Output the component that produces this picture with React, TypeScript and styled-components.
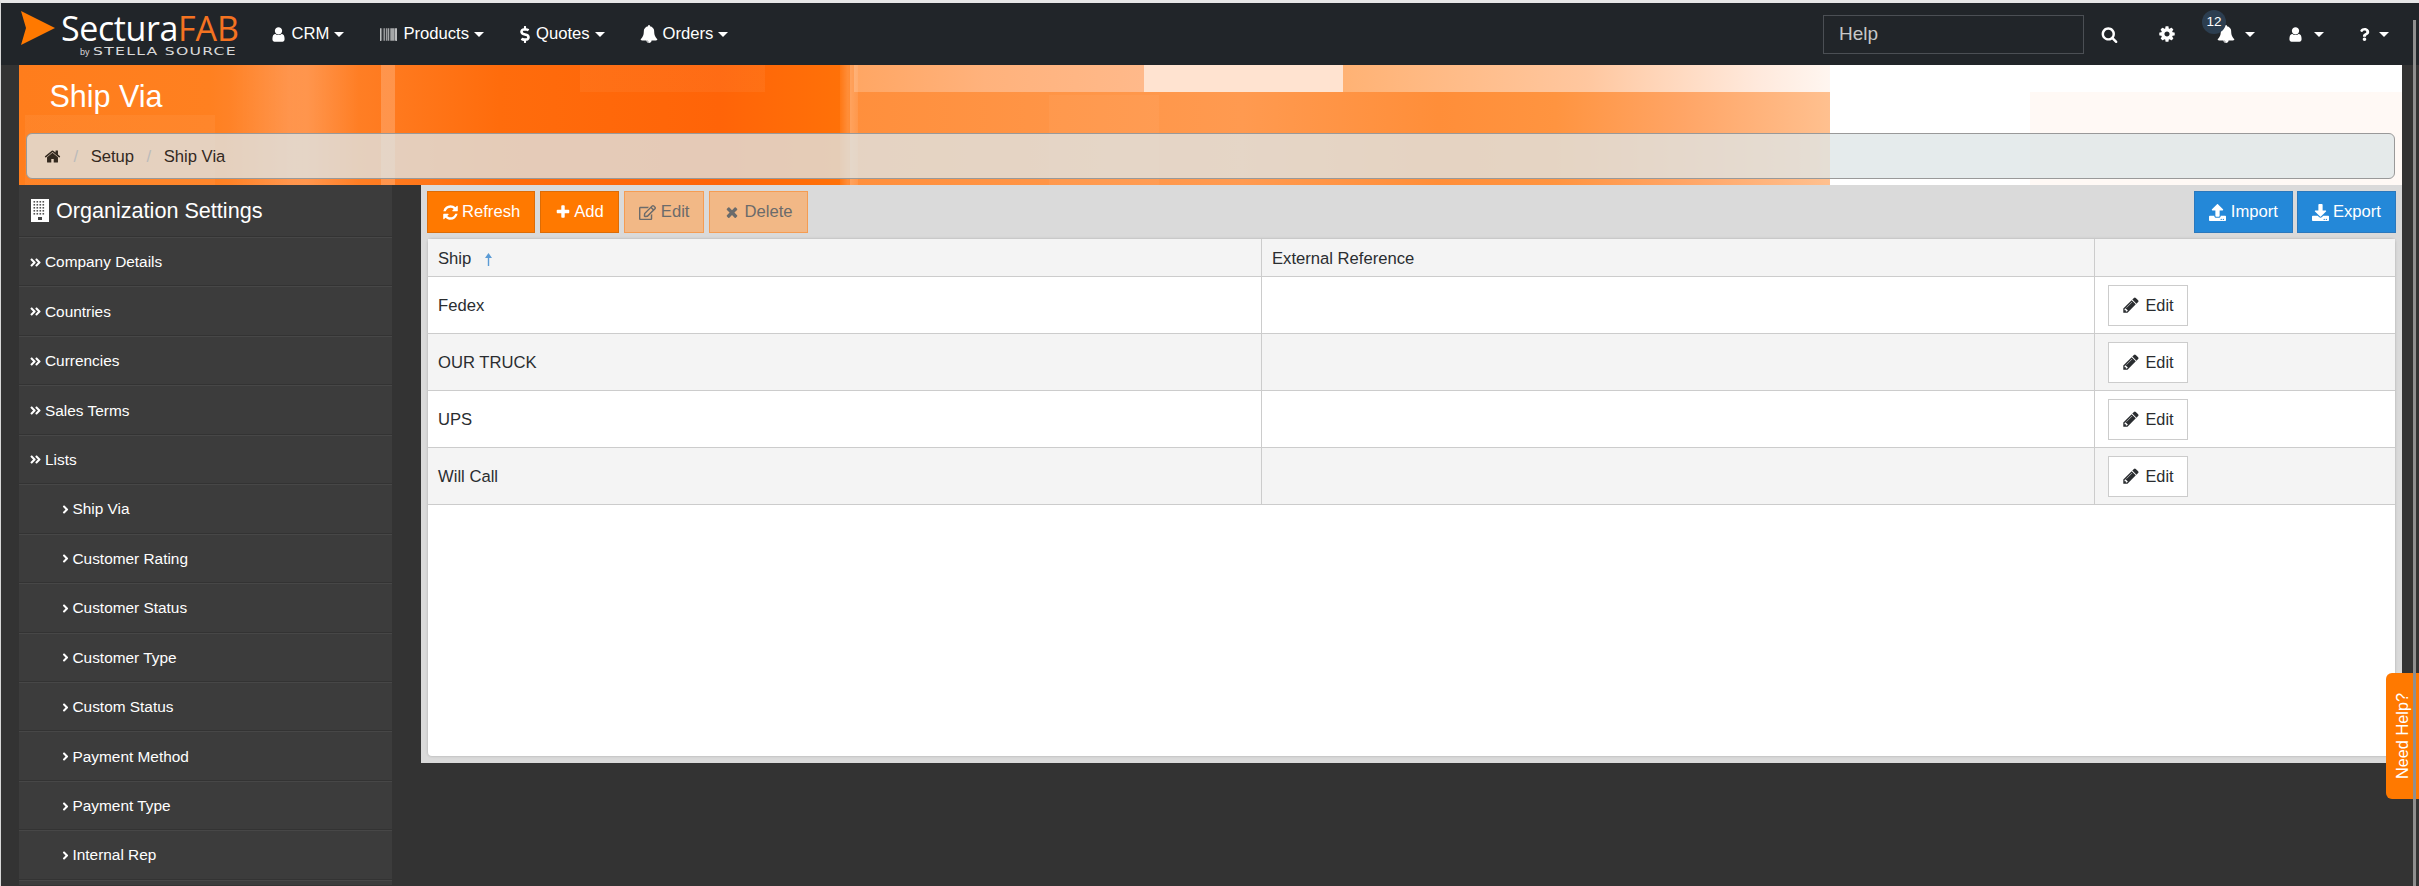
import React from "react";
import styled, { createGlobalStyle } from "styled-components";
import {
  FaAngleDoubleRight,
  FaAngleRight,
  FaBarcode,
  FaDollarSign,
  FaDownload,
  FaQuestion,
  FaRegEdit,
  FaUpload,
} from "react-icons/fa";

const GlobalStyle = createGlobalStyle`
  html, body {
    margin: 0;
    height: 100%;
    overflow: hidden;
    background: #333;
  }
  body, button, input, table {
    font-family: "Liberation Sans", Arial, sans-serif;
    font-size: 16.64px;
  }
  * {
    box-sizing: border-box;
  }
`;

// font awesome 4 shapes, react-icons only carries v5
const glyphs = {
  user: "M1536 1399q0 109-62.5 187t-150.5 78h-854q-88 0-150.5-78t-62.5-187q0-85 8.5-160.5t31.5-152 58.5-131 94-89 134.5-34.5q131 128 313 128t313-128q76 0 134.5 34.5t94 89 58.5 131 31.5 152 8.5 160.5zm-256-887q0 159-112.5 271.5t-271.5 112.5-271.5-112.5-112.5-271.5 112.5-271.5 271.5-112.5 271.5 112.5 112.5 271.5z",
  bell: "M912 1696q0-16-16-16-59 0-101.5-42.5t-42.5-101.5q0-16-16-16t-16 16q0 73 51.5 124.5t124.5 51.5q16 0 16-16zm816-288q0 52-38 90t-90 38h-448q0 106-75 181t-181 75-181-75-75-181h-448q-52 0-90-38t-38-90q50-42 91-88t85-119.5 74.5-158.5 50-206 19.5-260q0-152 117-282.5t307-158.5q-8-19-8-39 0-40 28-68t68-28 68 28 28 68q0 20-8 39 190 28 307 158.5t117 282.5q0 139 19.5 260t50 206 74.5 158.5 85 119.5 91 88z",
  search: "M1216 832q0-185-131.5-316.5t-316.5-131.5-316.5 131.5-131.5 316.5 131.5 316.5 316.5 131.5 316.5-131.5 131.5-316.5zm512 832q0 52-38 90t-90 38q-54 0-90-38l-343-342q-179 124-399 124-143 0-273.5-55.5t-225-150-150-225-55.5-273.5 55.5-273.5 150-225 225-150 273.5-55.5 273.5 55.5 225 150 150 225 55.5 273.5q0 220-124 399l343 343q37 37 37 90z",
  cog: "M1152 896q0-106-75-181t-181-75-181 75-75 181 75 181 181 75 181-75 75-181zm512-109v222q0 12-8 23t-20 13l-185 28q-19 54-39 91 35 50 107 138 10 12 10 25t-9 23q-27 37-99 108t-94 71q-12 0-26-9l-138-108q-44 23-91 38-16 136-29 186-7 28-36 28h-222q-14 0-24.5-8.5t-11.5-21.5l-28-184q-49-16-90-37l-141 107q-10 9-25 9-14 0-25-11-126-114-165-168-7-10-7-23 0-12 8-23 15-21 51-66.5t54-70.5q-27-50-41-99l-183-27q-13-2-21-12.5t-8-23.5v-222q0-12 8-23t19-13l186-28q14-46 39-92-40-57-107-138-10-12-10-24 0-10 9-23 26-36 98.5-107.5t94.5-71.5q13 0 26 10l138 107q44-23 91-38 16-136 29-186 7-28 36-28h222q14 0 24.5 8.5t11.5 21.5l28 184q49 16 90 37l142-107q9-9 24-9 13 0 25 10 129 119 165 170 7 8 7 22 0 12-8 23-15 21-51 66.5t-54 70.5q26 50 41 98l183 28q13 2 21 12.5t8 23.5z",
  home: "M1472 992v480q0 26-19 45t-45 19h-384v-384h-256v384h-384q-26 0-45-19t-19-45v-480q0-1 .5-3t.5-3l575-474 575 474q1 2 1 6zm223-69l-62 74q-8 9-21 11h-3q-13 0-21-7l-692-577-692 577q-12 8-24 7-13-2-21-11l-62-74q-8-10-7-23.5t11-21.5l719-599q32-26 76-26t76 26l244 204v-195q0-14 9-23t23-9h192q14 0 23 9t9 23v408l219 182q10 8 11 21.5t-7 23.5z",
  refresh: "M1639 1056q0 5-1 7-64 268-268 434.5t-478 166.5q-146 0-282.5-55t-243.5-157l-129 129q-19 19-45 19t-45-19-19-45v-448q0-26 19-45t45-19h448q26 0 45 19t19 45-19 45l-137 137q71 66 161 102t187 36q134 0 250-65t186-179q11-17 53-117 8-23 30-23h192q13 0 22.5 9.5t9.5 22.5zm25-800v448q0 26-19 45t-45 19h-448q-26 0-45-19t-19-45 19-45l138-138q-148-137-349-137-134 0-250 65t-186 179q-11 17-53 117-8 23-30 23h-199q-13 0-22.5-9.5t-9.5-22.5v-7q65-268 270-434.5t480-166.5q146 0 284 55.5t245 156.5l130-129q19-19 45-19t45 19 19 45z",
  plus: "M1600 736v192q0 40-28 68t-68 28h-416v416q0 40-28 68t-68 28h-192q-40 0-68-28t-28-68v-416h-416q-40 0-68-28t-28-68v-192q0-40 28-68t68-28h416v-416q0-40 28-68t68-28h192q40 0 68 28t28 68v416h416q40 0 68 28t28 68z",
  times: "M1490 1322q0 40-28 68l-136 136q-28 28-68 28t-68-28l-294-294-294 294q-28 28-68 28t-68-28l-136-136q-28-28-28-68t28-68l294-294-294-294q-28-28-28-68t28-68l136-136q28-28 68-28t68 28l294 294 294-294q28-28 68-28t68 28l136 136q28 28 28 68t-28 68l-294 294 294 294q28 28 28 68z",
  pencil: "M491 1536l91-91-235-235-91 91v107h128v128h107zm523-928q0-22-22-22-10 0-17 7l-542 542q-7 7-7 17 0 22 22 22 10 0 17-7l542-542q7-7 7-17zm-54-192l416 416-832 832h-416v-416zm683 96q0 53-37 90l-166 166-416-416 166-165q36-38 90-38 53 0 91 38l235 234q37 39 37 91z",
};

const Glyph: React.FC<{ name: keyof typeof glyphs; size: number }> = ({ name, size }) => (
  <svg width={size} height={size} viewBox="0 0 1792 1792" fill="currentColor" style={{ flex: "none" }}>
    <path d={glyphs[name]} />
  </svg>
);

const Page = styled.div`
  position: relative;
  height: 886px;
  overflow: hidden;
  background: #333;
  border-top: 3px solid #e6e6e6;
  border-left: 1px solid #d8d8d8;
`;

const Navbar = styled.nav`
  display: flex;
  align-items: center;
  gap: 36px;
  height: 62px;
  padding: 0 30px 0 20px;
  background: #212529;
  color: #fff;
`;

const Logo = styled.div`
  display: flex;
  width: 214.5px;
  height: 50px;
`;

const LogoWords = styled.div`
  margin-left: 5px;
  margin-top: 1px;
`;

const LogoName = styled.div`
  font-family: "Open Sans", sans-serif;
  font-size: 34px;
  line-height: 36px;
  letter-spacing: -0.4px;
  color: #fff;
  white-space: nowrap;
`;

const LogoAccent = styled.span`
  color: #f47321;
  letter-spacing: 0;
`;

const LogoByline = styled.div`
  display: flex;
  align-items: baseline;
  margin: 0 0 0 19px;
  color: #d9d9d9;
  white-space: nowrap;
`;

const LogoBy = styled.span`
  font-size: 9px;
  margin-right: 3px;
`;

const LogoSource = styled.span`
  font-family: "DejaVu Sans", sans-serif;
  font-size: 11px;
  letter-spacing: 0.9px;
  line-height: 12px;
  transform: scaleX(1.42);
  transform-origin: left;
`;

const NavLink = styled.a`
  display: flex;
  align-items: center;
  gap: 5px;
  color: #fff;
`;

const NavIcon = styled.span`
  display: flex;
  align-items: center;
  justify-content: center;
  width: ${(p: { $w: number }) => p.$w}px;
  margin-right: 1px;
`;

const Caret = styled.i`
  display: block;
  width: 0;
  height: 0;
  border-top: 5px solid #fff;
  border-left: 5px solid transparent;
  border-right: 5px solid transparent;
`;

const NavRight = styled.div`
  display: flex;
  align-items: center;
  margin-left: auto;
`;

const HelpSearch = styled.input`
  width: 261px;
  height: 39px;
  padding: 0 15px;
  border: 1px solid #4b4f54;
  background: transparent;
  font-size: 19px;
  outline: none;
  &::placeholder {
    color: #c6c7c8;
    opacity: 1;
  }
`;

const ToolIcon = styled.span<{ $ml: number; $gap?: number }>`
  position: relative;
  display: flex;
  align-items: center;
  gap: ${(p) => p.$gap ?? 10}px;
  margin-left: ${(p) => p.$ml}px;
  color: #fff;
`;

const Badge = styled.span`
  position: absolute;
  left: -15px;
  top: -15px;
  width: 24px;
  height: 24px;
  border-radius: 50%;
  background: #2c3e50;
  font-size: 13.5px;
  line-height: 24px;
  text-align: center;
  color: #fff;
`;

const Main = styled.div`
  padding: 0 17px 0 18px;
`;

const Banner = styled.header`
  height: 120px;
  padding: 0 7px 6px 6.5px;
  background-color: #fff;
  background-repeat: no-repeat;
  background-image:
    linear-gradient(rgba(255, 255, 255, 0.2), rgba(255, 255, 255, 0.2)),
    linear-gradient(90deg, rgba(255, 255, 255, 0.05), rgba(255, 255, 255, 0.2) 45%, rgba(255, 255, 255, 0.08)),
    linear-gradient(rgba(255, 255, 255, 0.05), rgba(255, 255, 255, 0.05)),
    linear-gradient(rgba(255, 255, 255, 0.05), rgba(255, 255, 255, 0.05)),
    linear-gradient(rgba(255, 255, 255, 0.04), rgba(255, 255, 255, 0.04)),
    linear-gradient(90deg, rgba(255, 255, 255, 0), rgba(255, 255, 255, 0.12) 60%, rgba(255, 255, 255, 0)),
    linear-gradient(90deg, #ffa663 0, #ffb27c 45%, #ffb98a 100%),
    linear-gradient(#ffe3d0, #ffe3d0),
    linear-gradient(90deg, #ffb274 0, #ffc79f 50%, #ffe9dc 85%, #fff6f0 100%),
    linear-gradient(90deg, #ff8f3c 0, #ff9a50 40%, #ff8e39 60%, #ff9440 72%, #ffa566 85%, #ffc08f 100%),
    linear-gradient(90deg, #ff7d1c 0, #ff8020 190px, #ff8a3a 270px, #ff7e24 340px, #ff6c0c 480px, #ff6408 700px, #ff7208 832px),
    linear-gradient(#fff9f5, #fff9f5);
  background-size:
    14px 100%,
    18px 100%,
    185px 27px,
    190px 70px,
    110px 90px,
    130px 100%,
    290px 27px,
    199px 27px,
    487px 27px,
    980px 100%,
    832px 100%,
    372px 100%;
  background-position:
    362px 0,
    821px 0,
    561px 0,
    6px 50px,
    1030px 30px,
    210px 0,
    835px 0,
    1125px 0,
    1324px 0,
    831px 0,
    0 0,
    2011px 27px;
`;

const PageTitle = styled.h1`
  margin: 0;
  height: 68px;
  padding-left: 24px;
  color: #fff;
  font-size: 30.5px;
  font-weight: 400;
  line-height: 62px;
`;

const Breadcrumb = styled.ol`
  display: flex;
  align-items: center;
  height: 46px;
  margin: 0;
  padding: 1px 17.5px 0;
  list-style: none;
  border: 1px solid #999;
  border-radius: 6px;
  background: rgba(222, 229, 231, 0.79);
  color: #33291f;
`;

const Crumb = styled.li`
  display: flex;
  align-items: center;
`;

const CrumbSlash = styled.span`
  margin: 0 12.5px;
  color: #bbb;
`;

const Body = styled.div`
  display: flex;
  align-items: flex-start;
  gap: 29px;
`;

const Sidebar = styled.aside`
  flex: none;
  width: 373px;
  height: 700px;
  background: #3c3c3c;
  color: #fff;
`;

const SideTitle = styled.h2`
  display: flex;
  align-items: center;
  gap: 7px;
  height: 52px;
  margin: 0;
  padding-left: 12px;
  font-size: 21.6px;
  font-weight: 400;
  border-bottom: 1px solid #333;
  box-shadow: 0 1px 0 #474747;
`;

const SideItem = styled.div<{ $sub?: boolean }>`
  display: flex;
  align-items: center;
  gap: ${(p) => (p.$sub ? "1px" : "3px")};
  height: 49.45px;
  padding: 2px 0 0 ${(p) => (p.$sub ? "39.5px" : "10px")};
  font-size: 15.4px;
  border-bottom: 1px solid #333;
  box-shadow: 0 1px 0 #474747;
`;

const Panel = styled.section`
  flex: 1;
  height: 578px;
  padding: 6px 7px 7px 6px;
  background: #dadada;
`;

const Toolbar = styled.div`
  display: flex;
  justify-content: space-between;
  height: 42px;
  margin: 0 -1px 6px 0;
`;

const ToolGroup = styled.div<{ $gap: number }>`
  display: flex;
  gap: ${(p) => p.$gap}px;
`;

const ToolButton = styled.button<{ $kind: "primary" | "muted" | "blue"; $gap: number }>`
  display: flex;
  align-items: center;
  gap: ${(p) => p.$gap}px;
  height: 42px;
  padding: 0 14px;
  border: 1px solid
    ${(p) => (p.$kind === "primary" ? "#dd6c05" : p.$kind === "muted" ? "#f59c52" : "#2a78bd")};
  background: ${(p) => (p.$kind === "primary" ? "#ff7900" : p.$kind === "muted" ? "#f2b886" : "#2488d8")};
  color: ${(p) => (p.$kind === "muted" ? "#6b6b6b" : "#fff")};
  font-size: 16.64px;
`;

const TableCard = styled.div`
  height: 517px;
  margin-left: 1px;
  background: #fff;
  border-radius: 4px;
  box-shadow: 0 0 3px rgba(0, 0, 0, 0.22);
`;

const Grid = styled.table`
  width: 100%;
  table-layout: fixed;
  border-collapse: separate;
  border-spacing: 0;
  color: #2a2d30;
`;

const HeadCell = styled.th`
  height: 38px;
  padding: 3px 0 0 10px;
  background: #f4f4f4;
  font-weight: 400;
  text-align: left;
  border-right: 1px solid #ccc;
  border-bottom: 1px solid #ccc;
  &:last-child {
    border-right: 0;
  }
`;

const SortArrow = styled.svg`
  margin-left: 14px;
  vertical-align: -2px;
`;

const BodyRow = styled.tr`
  &:nth-child(even) td {
    background: #f4f4f4;
  }
`;

const BodyCell = styled.td`
  height: 57px;
  padding: 1px 0 0 10px;
  border-right: 1px solid #ccc;
  border-bottom: 1px solid #ccc;
  &:last-child {
    border-right: 0;
    padding: 0 0 0 13px;
  }
`;

const EditButton = styled.button`
  display: flex;
  align-items: center;
  justify-content: center;
  gap: 5px;
  width: 80px;
  height: 41px;
  padding: 0;
  border: 1px solid #ccc;
  background: #fff;
  color: #2a2d30;
  font-size: 16.3px;
`;

const HelpTab = styled.div`
  position: absolute;
  right: 0;
  top: 670px;
  width: 33px;
  height: 126px;
  display: flex;
  align-items: center;
  justify-content: center;
  background: #ff7900;
  border-radius: 0 6px 6px 0;
  color: #fff;
  font-size: 16.3px;
  writing-mode: vertical-rl;
  transform: rotate(180deg);
`;

const ScrollThumb = styled.div`
  position: absolute;
  top: 17px;
  bottom: 0;
  right: 3px;
  width: 3px;
  background: #8f8f8f;
`;

const topItems = ["Company Details", "Countries", "Currencies", "Sales Terms", "Lists"];
const subItems = [
  "Ship Via",
  "Customer Rating",
  "Customer Status",
  "Customer Type",
  "Custom Status",
  "Payment Method",
  "Payment Type",
  "Internal Rep",
];
const ships = ["Fedex", "OUR TRUCK", "UPS", "Will Call"];
const buildingCols = [2.5, 5.5, 8.5, 11.5];
const buildingRows = [2, 5, 8, 11, 14];

const App: React.FC = () => (
  <Page>
    <GlobalStyle />
    <Navbar>
      <Logo>
        <svg width="35" height="35" viewBox="0 0 35 35" style={{ flex: "none", marginTop: 2 }}>
          <path d="M0 0 L34 17 L0 34 L5 17 Z" fill="#ff7900" />
        </svg>
        <LogoWords>
          <LogoName>
            Sectura<LogoAccent>FAB</LogoAccent>
          </LogoName>
          <LogoByline>
            <LogoBy>by</LogoBy>
            <LogoSource>STELLA SOURCE</LogoSource>
          </LogoByline>
        </LogoWords>
      </Logo>
      <NavLink>
        <NavIcon $w={14}>
          <Glyph name="user" size={17} />
        </NavIcon>
        CRM
        <Caret />
      </NavLink>
      <NavLink>
        <NavIcon $w={17}>
          <FaBarcode size={17} />
        </NavIcon>
        Products
        <Caret />
      </NavLink>
      <NavLink>
        <NavIcon $w={10}>
          <FaDollarSign size={17} />
        </NavIcon>
        Quotes
        <Caret />
      </NavLink>
      <NavLink>
        <NavIcon $w={16}>
          <Glyph name="bell" size={18} />
        </NavIcon>
        Orders
        <Caret />
      </NavLink>
      <NavRight>
        <HelpSearch placeholder="Help" />
        <ToolIcon $ml={17}>
          <Glyph name="search" size={17} />
        </ToolIcon>
        <ToolIcon $ml={40}>
          <Glyph name="cog" size={18} />
        </ToolIcon>
        <ToolIcon $ml={41}>
          <Badge>12</Badge>
          <Glyph name="bell" size={18} />
          <Caret />
        </ToolIcon>
        <ToolIcon $ml={32}>
          <Glyph name="user" size={17} />
          <Caret />
        </ToolIcon>
        <ToolIcon $ml={34} $gap={8}>
          <FaQuestion size={13} />
          <Caret />
        </ToolIcon>
      </NavRight>
    </Navbar>
    <Main>
      <Banner>
        <PageTitle>Ship Via</PageTitle>
        <Breadcrumb>
          <Crumb>
            <Glyph name="home" size={17} />
            <CrumbSlash>/</CrumbSlash>
          </Crumb>
          <Crumb>
            Setup
            <CrumbSlash>/</CrumbSlash>
          </Crumb>
          <Crumb>Ship Via</Crumb>
        </Breadcrumb>
      </Banner>
      <Body>
        <Sidebar>
          <SideTitle>
            <svg width="18" height="23" viewBox="0 0 18 23" style={{ flex: "none" }}>
              <rect width="18" height="23" fill="#fff" />
              {buildingCols.map((x) =>
                buildingRows.map((y) => <rect key={`${x}-${y}`} x={x} y={y} width="1.6" height="1.6" fill="#555" />),
              )}
              <rect x="7" y="18" width="4" height="3" fill="#444" />
            </svg>
            Organization Settings
          </SideTitle>
          {topItems.map((item) => (
            <SideItem key={item}>
              <FaAngleDoubleRight size={13} />
              {item}
            </SideItem>
          ))}
          {subItems.map((item) => (
            <SideItem key={item} $sub>
              <FaAngleRight size={13} />
              {item}
            </SideItem>
          ))}
        </Sidebar>
        <Panel>
          <Toolbar>
            <ToolGroup $gap={5}>
              <ToolButton $kind="primary" $gap={3}>
                <Glyph name="refresh" size={17} />
                Refresh
              </ToolButton>
              <ToolButton $kind="primary" $gap={3}>
                <Glyph name="plus" size={16} />
                Add
              </ToolButton>
              <ToolButton $kind="muted" $gap={5}>
                <FaRegEdit size={17} />
                Edit
              </ToolButton>
              <ToolButton $kind="muted" $gap={4}>
                <Glyph name="times" size={16} />
                Delete
              </ToolButton>
            </ToolGroup>
            <ToolGroup $gap={4}>
              <ToolButton $kind="blue" $gap={5}>
                <FaUpload size={17} />
                Import
              </ToolButton>
              <ToolButton $kind="blue" $gap={4}>
                <FaDownload size={17} />
                Export
              </ToolButton>
            </ToolGroup>
          </Toolbar>
          <TableCard>
            <Grid>
              <colgroup>
                <col width="834" />
                <col width="833" />
                <col />
              </colgroup>
              <thead>
                <tr>
                  <HeadCell>
                    Ship
                    <SortArrow width="7" height="13" viewBox="0 0 7 13">
                      <path d="M3.5 0 L7 5 H4.2 V13 H2.8 V5 H0 Z" fill="#5b9bd5" />
                    </SortArrow>
                  </HeadCell>
                  <HeadCell>External Reference</HeadCell>
                  <HeadCell />
                </tr>
              </thead>
              <tbody>
                {ships.map((ship) => (
                  <BodyRow key={ship}>
                    <BodyCell>{ship}</BodyCell>
                    <BodyCell />
                    <BodyCell>
                      <EditButton>
                        <Glyph name="pencil" size={18} />
                        Edit
                      </EditButton>
                    </BodyCell>
                  </BodyRow>
                ))}
              </tbody>
            </Grid>
          </TableCard>
        </Panel>
      </Body>
    </Main>
    <HelpTab>Need Help?</HelpTab>
    <ScrollThumb />
  </Page>
);

export default App;
